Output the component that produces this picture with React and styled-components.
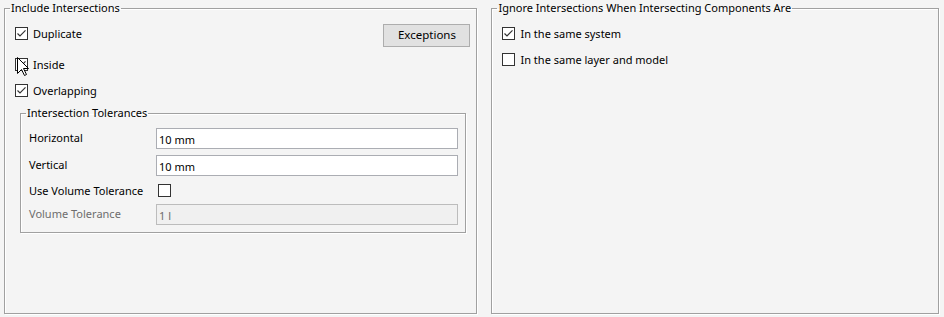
import React from "react";
import styled, { createGlobalStyle } from "styled-components";

const GlobalStyle = createGlobalStyle`
  html, body {
    margin: 0;
    padding: 0;
    background: #f4f4f4;
  }
  body {
    font-family: "Noto Sans", "Liberation Sans", sans-serif;
    font-size: 11px;
    color: #000;
  }
`;

const Page = styled.div`
  display: flex;
  gap: 14px;
  padding: 0 5px 0 4px;
  height: 317px;
  box-sizing: border-box;
`;

const GroupBox = styled.fieldset`
  box-sizing: border-box;
  width: ${(p) => p.$width}px;
  height: 314px;
  margin: 0;
  padding: 0;
  min-width: 0;
  border: 1px solid #a0a0a0;
  box-shadow: inset 1px 1px 0 #fff, 1px 1px 0 #fff;
`;

const Legend = styled.legend`
  margin-left: 5px;
  padding: 0 1px;
  line-height: 16px;
  height: 16px;
`;

const Body = styled.div`
  padding: ${(p) => p.$top}px 8px 0 10px;
`;

const TopRow = styled.div`
  display: flex;
  justify-content: space-between;
  align-items: flex-start;
  height: 24px;
`;

const CheckRow = styled.label`
  position: relative;
  display: flex;
  align-items: center;
  gap: 5px;
  height: 13px;
  margin-top: ${(p) => p.$mt || 0}px;
  white-space: nowrap;
`;

const Box = styled.svg`
  flex: none;
  width: 13px;
  height: 13px;
  display: block;
`;

const Cursor = styled.svg`
  position: absolute;
  left: 2px;
  top: -1px;
  width: 13px;
  height: 20px;
`;

const Button = styled.button`
  box-sizing: border-box;
  width: 87px;
  height: 23px;
  margin: 1px -2px 0 0;
  background: #e1e1e1;
  border: 1px solid #adadad;
  font: inherit;
  font-size: 11.5px;
  color: #000;
  padding: 0 0 2px;
`;

const InnerGroup = styled.fieldset`
  box-sizing: border-box;
  margin: 8px 2px 0 5px;
  padding: 0;
  min-width: 0;
  border: 1px solid #a0a0a0;
  box-shadow: inset 1px 1px 0 #fff, 1px 1px 0 #fff;
`;

const Grid = styled.div`
  display: grid;
  grid-template-columns: 127px 1fr;
  grid-template-rows: 21px 21px 16px 21px;
  row-gap: 6px;
  align-items: center;
  padding: 7px 7px 7px 8px;
`;

const FieldLabel = styled.span`
  color: ${(p) => (p.$disabled ? "#6d6d6d" : "#000")};
  margin-bottom: ${(p) => (p.$flush ? 0 : 3)}px;
  white-space: nowrap;
`;

const TextBox = styled.div`
  box-sizing: border-box;
  height: 21px;
  display: flex;
  align-items: center;
  padding: 1px 0 0 2px;
  border: 1px solid ${(p) => (p.$disabled ? "#bcbcbc" : "#abadb3")};
  background: ${(p) => (p.$disabled ? "#f0f0f0" : "#fff")};
  color: ${(p) => (p.$disabled ? "#6d6d6d" : "#000")};
`;

const CheckCell = styled.div`
  display: flex;
  align-items: center;
  padding-left: 2px;
`;

const CheckBox = ({ checked }) => (
  <Box viewBox="0 0 13 13">
    <rect x="0.5" y="0.5" width="12" height="12" fill="#fff" stroke="#333" />
    {checked && (
      <polyline
        points="2.5,6.5 5,9 10.5,3.3"
        fill="none"
        stroke="#333"
        strokeWidth="1.2"
      />
    )}
  </Box>
);

const Check = ({ checked, label, mt, children }) => (
  <CheckRow $mt={mt}>
    <CheckBox checked={checked} />
    <span>{label}</span>
    {children}
  </CheckRow>
);

export default function App() {
  return (
    <>
      <GlobalStyle />
      <Page>
        <GroupBox $width={474}>
          <Legend>Include Intersections</Legend>
          <Body $top={7}>
            <TopRow>
              <Check checked label="Duplicate" mt={4} />
              <Button>Exceptions</Button>
            </TopRow>
            <Check checked label="Inside" mt={11}>
              <Cursor viewBox="0 0 13 20">
                <path
                  d="M0.5 0.5 V16.5 L4.5 12.5 L7.5 18.5 L9.5 17.5 L6.5 11.5 H11.5 Z"
                  fill="#fff"
                  stroke="#000"
                />
              </Cursor>
            </Check>
            <Check checked label="Overlapping" mt={13} />
            <InnerGroup>
              <Legend>Intersection Tolerances</Legend>
              <Grid>
                <FieldLabel>Horizontal</FieldLabel>
                <TextBox>10 mm</TextBox>
                <FieldLabel>Vertical</FieldLabel>
                <TextBox>10 mm</TextBox>
                <FieldLabel $flush>Use Volume Tolerance</FieldLabel>
                <CheckCell>
                  <CheckBox />
                </CheckCell>
                <FieldLabel $disabled>Volume Tolerance</FieldLabel>
                <TextBox $disabled>1 l</TextBox>
              </Grid>
            </InnerGroup>
          </Body>
        </GroupBox>
        <GroupBox $width={448}>
          <Legend>Ignore Intersections When Intersecting Components Are</Legend>
          <Body $top={11}>
            <Check checked label="In the same system" />
            <Check label="In the same layer and model" mt={13} />
          </Body>
        </GroupBox>
      </Page>
    </>
  );
}
